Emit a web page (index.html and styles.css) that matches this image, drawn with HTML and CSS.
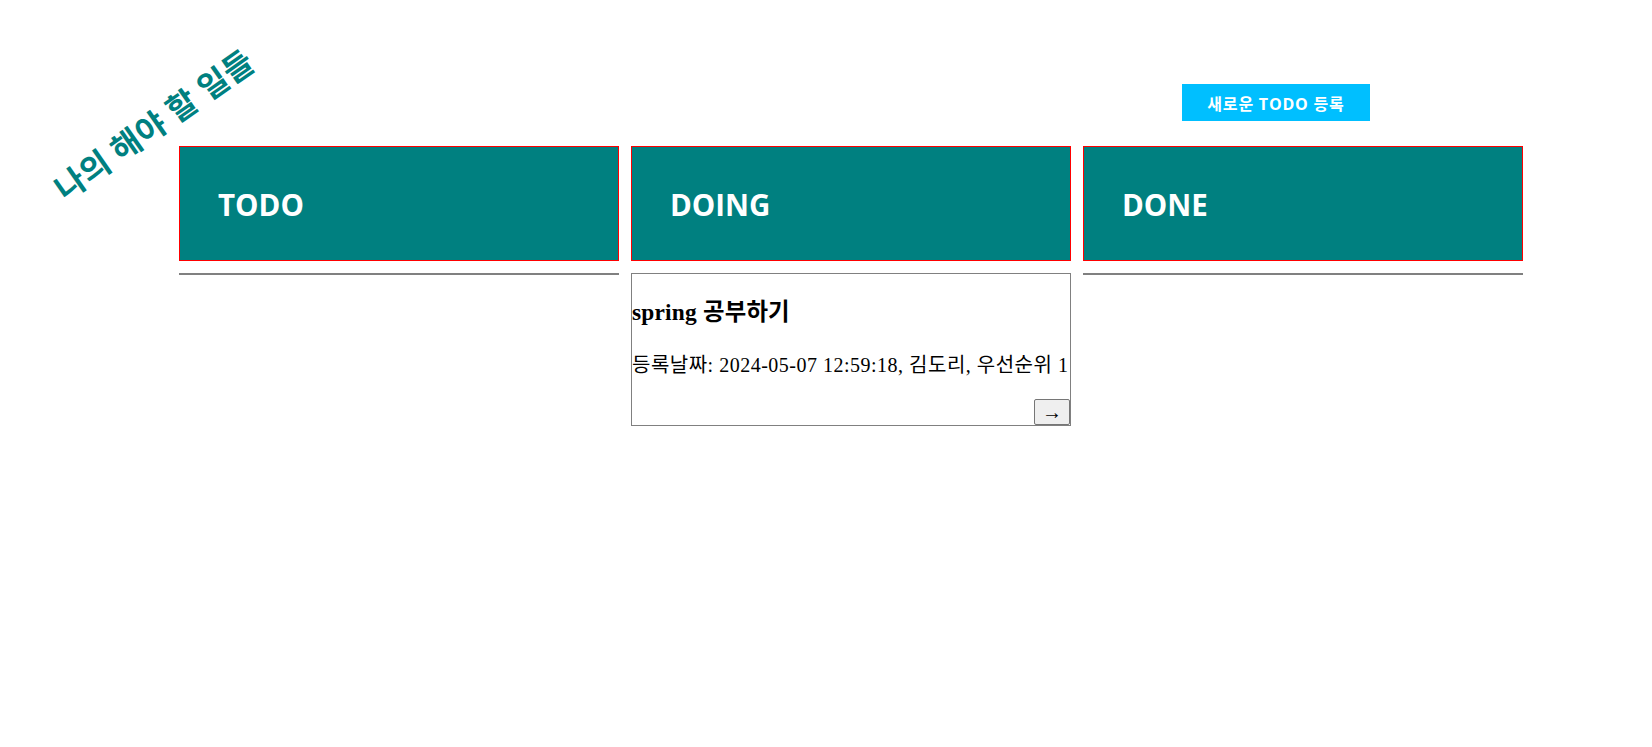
FILE: index.html
```html
<!DOCTYPE html>
<html lang="ko">
<head>
<meta charset="utf-8">
<title>TODO</title>
<link rel="stylesheet" href="styles.css">
</head>
<body>
<div class="page">
  <header class="topbar">
    <h1 class="title">나의 해야 할 일들</h1>
    <button class="new-btn" type="button">새로운 TODO 등록</button>
  </header>
  <main class="board">
    <section class="column">
      <div class="column-head"><h2>TODO</h2></div>
      <div class="list"></div>
    </section>
    <section class="column">
      <div class="column-head"><h2>DOING</h2></div>
      <div class="list">
        <article class="card">
          <h3 class="card-title">spring 공부하기</h3>
          <p class="card-meta">등록날짜: 2024-05-07 12:59:18, 김도리, 우선순위 1</p>
          <div class="card-actions"><button class="move-btn" type="button">→</button></div>
        </article>
      </div>
    </section>
    <section class="column">
      <div class="column-head"><h2>DONE</h2></div>
      <div class="list"></div>
    </section>
  </main>
</div>
</body>
</html>
```
FILE: styles.css
```css
html, body {
  margin: 0;
  padding: 0;
  background: #fff;
}
body {
  font-family: "Liberation Serif", "Noto Sans CJK KR", serif;
  font-size: 20px;
  color: #000;
}
.page {
  padding-top: 84px;
}
.topbar {
  display: flex;
  align-items: flex-start;
  height: 62px;
}
.title {
  margin: 18px 0 0 37px;
  font-family: "Open Sans", "Noto Sans CJK KR", sans-serif;
  font-size: 32px;
  font-weight: bold;
  line-height: 46px;
  letter-spacing: 0.3px;
  color: #008080;
  white-space: nowrap;
  transform: rotate(-35deg);
  transform-origin: center;
}
.new-btn {
  margin-left: auto;
  margin-right: 282px;
  width: 188px;
  height: 37px;
  padding: 0;
  border: none;
  background: #00bfff;
  color: #fff;
  font-family: "Open Sans", "Noto Sans CJK KR", sans-serif;
  font-size: 16px;
  font-weight: bold;
  letter-spacing: 0.8px;
}
.board {
  display: flex;
  gap: 12px;
  margin-left: 179px;
}
.column {
  width: 440px;
}
.column-head {
  box-sizing: border-box;
  height: 115px;
  border: 1px solid #ff0000;
  background: #008080;
  display: flex;
  align-items: center;
  padding-left: 38px;
}
.column-head h2 {
  margin: 0;
  font-family: "Open Sans", "Noto Sans CJK KR", sans-serif;
  font-size: 29.5px;
  font-weight: bold;
  color: #fff;
  line-height: 40px;
  padding-top: 2px;
}
.list {
  margin-top: 12px;
  border: 1px solid #808080;
}
.card-title {
  margin: 23.4px 0;
  font-size: 23.4px;
  font-weight: bold;
  line-height: 31px;
  letter-spacing: 0.2px;
}
.card-meta {
  margin: 20px 0;
  font-size: 20px;
  line-height: 27px;
  letter-spacing: 0.5px;
}
.card-actions {
  display: flex;
  justify-content: flex-end;
}
.move-btn {
  box-sizing: border-box;
  width: 36px;
  height: 26px;
  padding: 0;
  border: 1px solid #767676;
  border-radius: 2px;
  background: #efefef;
  font-family: "Liberation Serif", serif;
  font-size: 20px;
  line-height: 1;
  color: #000;
}
```
